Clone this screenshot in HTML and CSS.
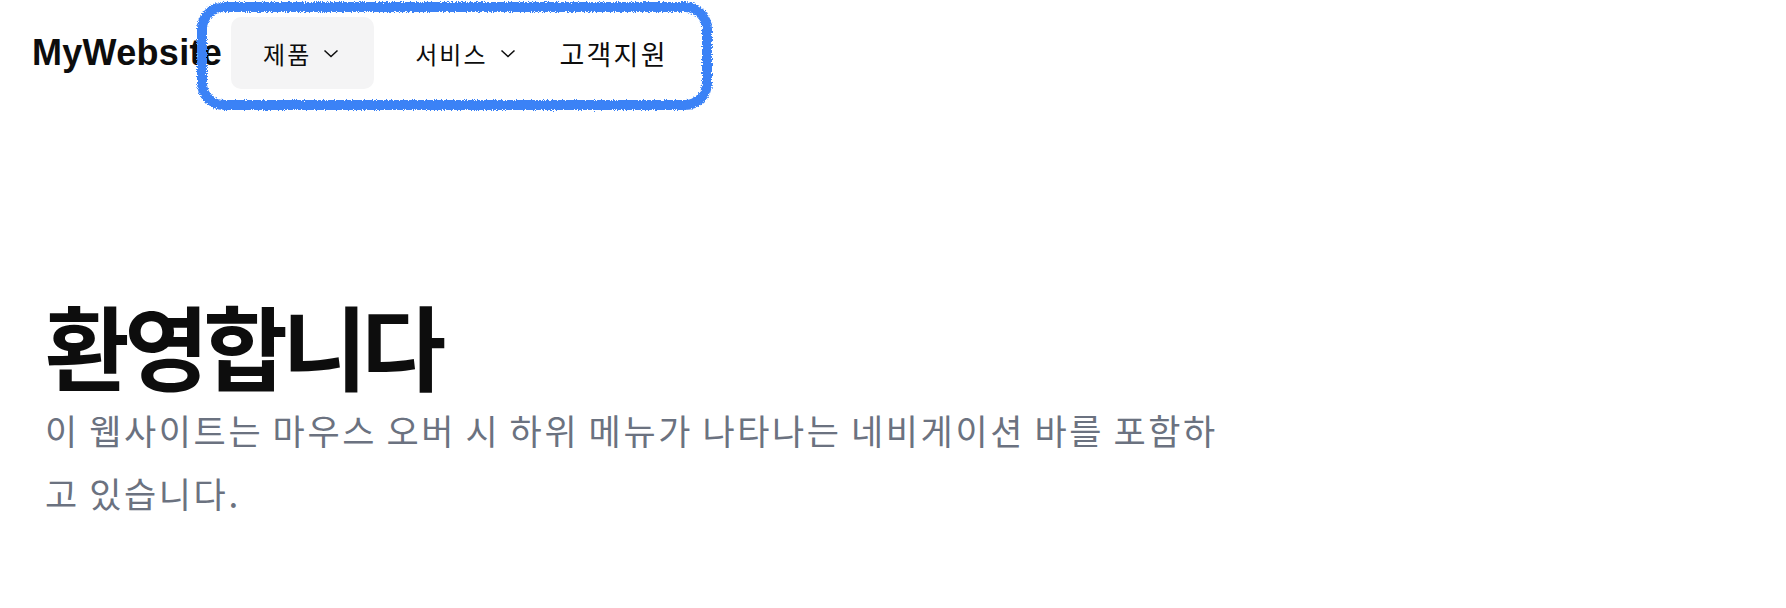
FILE: index.html
```html
<!DOCTYPE html>
<html lang="ko">
<head>
    <meta charset="UTF-8">
    <meta name="viewport" content="width=device-width, initial-scale=1.0">
    <title>MyWebsite</title>
    <link rel="stylesheet" href="styles.css">
</head>
<body>
    <header class="site-header">
        <a class="logo" href="#">MyWebsite</a>
        <nav class="main-nav">
            <button class="nav-item nav-item--active">
                <span>제품</span>
                <svg class="chevron" viewBox="0 0 16 16" width="16" height="16"><path d="M1.5 5.5 L8 11.5 L14.5 5.5" /></svg>
            </button>
            <button class="nav-item">
                <span>서비스</span>
                <svg class="chevron" viewBox="0 0 16 16" width="16" height="16"><path d="M1.5 5.5 L8 11.5 L14.5 5.5" /></svg>
            </button>
            <a class="nav-link" href="#">고객지원</a>
        </nav>

        <!-- hand-drawn highlight around the nav -->
        <svg class="highlight" viewBox="0 0 530 120" width="530" height="120">
            <defs>
                <filter id="rough" x="-5%" y="-10%" width="110%" height="120%">
                    <feTurbulence type="fractalNoise" baseFrequency="0.9" numOctaves="2" seed="3" result="noise" />
                    <feDisplacementMap in="SourceGraphic" in2="noise" scale="5" xChannelSelector="R" yChannelSelector="G" />
                </filter>
            </defs>
            <rect x="12" y="7" width="505" height="98" rx="22" ry="22" class="highlight-line" filter="url(#rough)" />
        </svg>
    </header>

    <main class="hero">
        <h1 class="hero-title">환영합니다</h1>
        <p class="hero-text">이 웹사이트는 마우스 오버 시 하위 메뉴가 나타나는 네비게이션 바를 포함하고 있습니다.</p>
    </main>
</body>
</html>
```

FILE: styles.css
```css
:root {
    --text-color: #0d0d0d;
    --text-muted: #6b7280;
    --chip-color: #f4f4f5;
    --mark-color: #3b82f6;
}

body {
    margin: 0;
    font-family: "Noto Sans CJK KR", "Noto Sans", sans-serif;
    color: var(--text-color);
    background: #fff;
}

.site-header {
    position: relative;
    display: flex;
    align-items: center;
    padding: 17px 32px;
}

.logo {
    font-family: "Liberation Sans", Arial, sans-serif;
    font-weight: 700;
    font-size: 36px;
    letter-spacing: 0.3px;
    color: var(--text-color);
    text-decoration: none;
}

.main-nav {
    display: flex;
    align-items: center;
    gap: 9px;
    margin-left: 9px;
}

.nav-item {
    display: flex;
    align-items: center;
    gap: 12px;
    height: 72px;
    padding: 0 35px 0 32px;
    border: none;
    border-radius: 10px;
    background: transparent;
    font-family: inherit;
    font-size: 24px;
    letter-spacing: 2px;
    color: var(--text-color);
    cursor: pointer;
}

.nav-item--active {
    background: var(--chip-color);
}

.chevron {
    fill: none;
    stroke: var(--text-color);
    stroke-width: 1.5;
}

.nav-link {
    font-size: 27px;
    letter-spacing: 2.2px;
    color: var(--text-color);
    text-decoration: none;
}

.highlight {
    position: absolute;
    left: 190px;
    top: 0;
    pointer-events: none;
}

.highlight-line {
    fill: none;
    stroke: var(--mark-color);
    stroke-width: 10;
}

.hero {
    padding: 184px 45px 0;
}

.hero-title {
    margin: 0;
    font-size: 92px;
    font-weight: 700;
    line-height: 108px;
    letter-spacing: -5.5px;
}

.hero-text {
    max-width: 1190px;
    margin: 0;
    font-size: 35px;
    line-height: 63px;
    letter-spacing: 2.6px;
    word-spacing: -3px;
    color: var(--text-muted);
}
```
